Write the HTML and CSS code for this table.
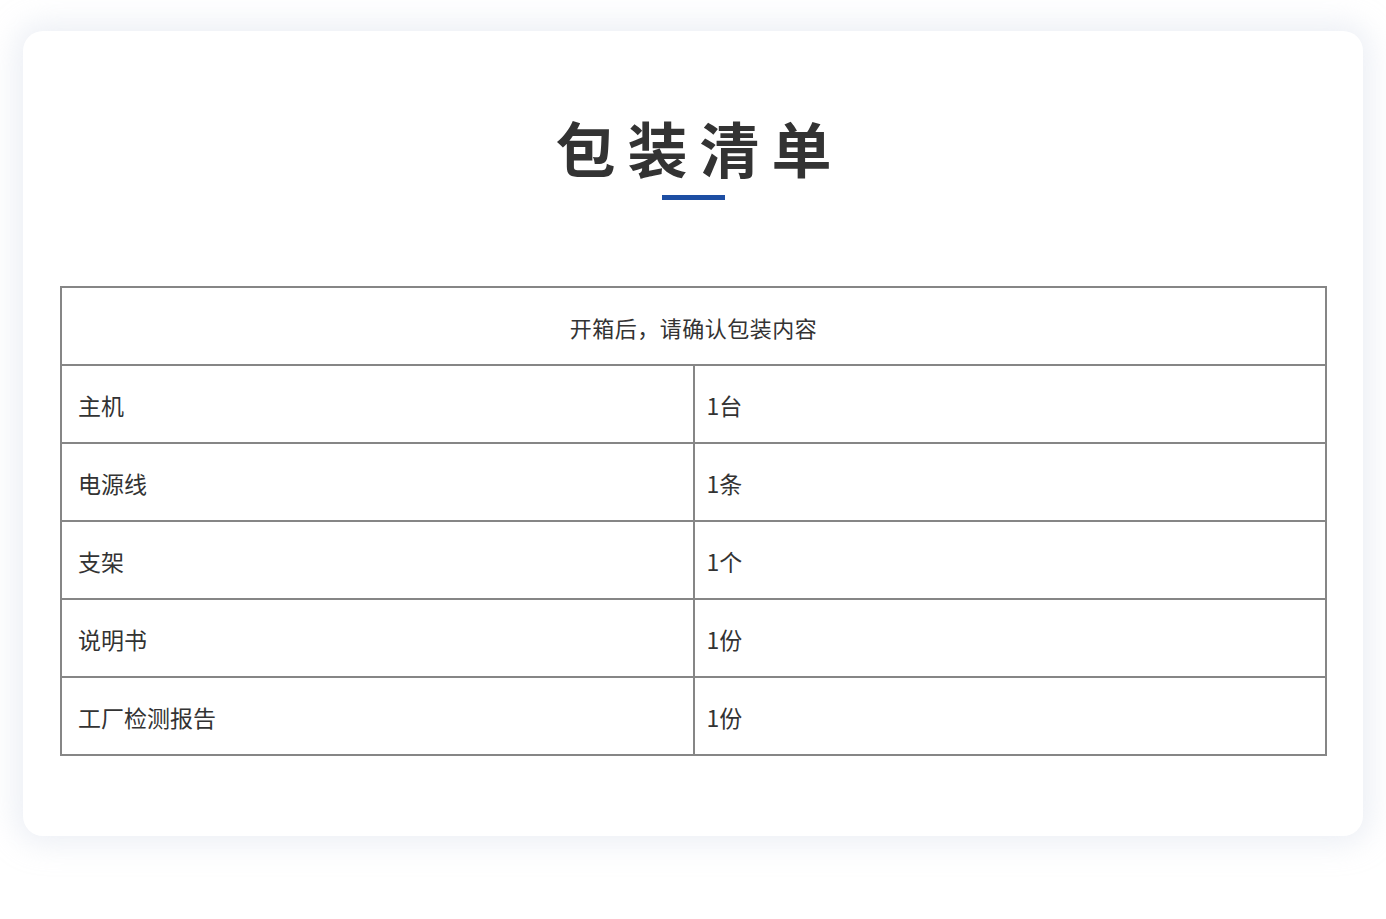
FILE: index.html
```html
<!DOCTYPE html>
<html lang="zh-CN">
<head>
<meta charset="utf-8">
<title>包装清单</title>
<link rel="stylesheet" href="styles.css">
</head>
<body>
<div class="page">
  <section class="card">
    <h1 class="title">包装清单</h1>
    <div class="bar"></div>
    <table class="list">
      <thead>
        <tr><th colspan="2">开箱后，请确认包装内容</th></tr>
      </thead>
      <tbody>
        <tr><td>主机</td><td>1台</td></tr>
        <tr><td>电源线</td><td>1条</td></tr>
        <tr><td>支架</td><td>1个</td></tr>
        <tr><td>说明书</td><td>1份</td></tr>
        <tr><td>工厂检测报告</td><td>1份</td></tr>
      </tbody>
    </table>
  </section>
</div>
</body>
</html>
```
FILE: styles.css
```css
html, body {
  margin: 0;
  padding: 0;
  background: #ffffff;
}
body {
  font-family: "Noto Sans CJK SC", "Noto Sans", sans-serif;
  color: #333333;
}
.page {
  padding: 31px 23px 83px 23px;
}
.card {
  background: #ffffff;
  border-radius: 20px;
  box-shadow: 0 0 30px 8px rgba(200, 210, 225, 0.35);
  height: 805px;
  box-sizing: border-box;
  padding: 80px 36px 0 37px;
  display: flex;
  flex-direction: column;
  align-items: center;
}
.title {
  margin: 0;
  font-size: 60px;
  font-weight: 700;
  line-height: 72px;
  letter-spacing: 12px;
  margin-right: -12px;
  color: #333333;
}
.bar {
  width: 63px;
  height: 5px;
  background: #1d4ea3;
  margin-top: 12px;
}
.list {
  margin-top: 86px;
  width: 100%;
  border-collapse: collapse;
  table-layout: fixed;
  font-size: 23px;
}
.list th,
.list td {
  border: 2px solid #868686;
  height: 74px;
  padding: 2px 16px 0 16px;
  text-align: left;
  font-weight: 400;
  color: #333333;
}
.list th {
  text-align: center;
  font-size: 22px;
  letter-spacing: 0.5px;
}
.list td + td {
  padding-left: 12px;
}
```
